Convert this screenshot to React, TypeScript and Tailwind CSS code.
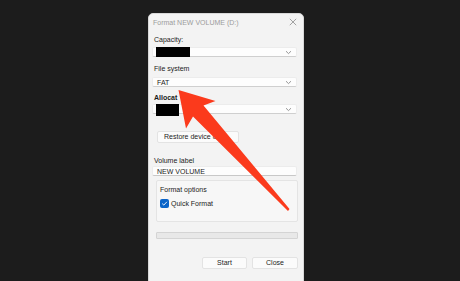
import React from "react";

const Chevron = () => (
  <svg width="7" height="5" viewBox="0 0 7 5" className="shrink-0">
    <path d="M1 1.2 L3.5 3.6 L6 1.2" fill="none" stroke="#8a8a8a" strokeWidth="0.9" />
  </svg>
);

const Combo = ({ children }: { children?: React.ReactNode }) => (
  <div className="relative flex h-[10px] w-[145px] items-center justify-between rounded-[2px] border border-[#ececec] border-b-[#cfcfcf] bg-[#fdfdfd] pl-[3px] pr-[4px]">
    <div className="flex items-center">{children}</div>
    <Chevron />
  </div>
);

export default function App() {
  return (
    <div
      className="relative h-[281px] w-[460px] overflow-hidden bg-[#1c1c1c] pl-[148px] pt-[13px] text-[7px] text-[#1b1b1b]"
      style={{ fontFamily: '"Liberation Sans", Arial, sans-serif' }}
    >
      <div className="flex h-[280px] w-[156px] flex-col rounded-t-[5px] border border-[#d8d8d8] bg-[#f3f3f3]">
        {/* title bar */}
        <div className="flex h-[16px] items-center justify-between pl-[4px] pr-[6px]">
          <span className="text-[7px] leading-none text-[#9c9c9c]">Format NEW VOLUME (D:)</span>
          <svg width="8" height="8" viewBox="0 0 8 8">
            <path d="M0.8 0.8 L7.2 7.2 M7.2 0.8 L0.8 7.2" stroke="#8c8c8c" strokeWidth="0.8" />
          </svg>
        </div>

        <div className="flex flex-col pl-[3px]">
          <div className="mt-[5px] h-[10px] pl-[2px] leading-[10px]">Capacity:</div>
          <div className="mt-[2px]">
            <Combo>
              <div className="h-[10px] w-[34px] bg-black" />
            </Combo>
          </div>

          <div className="mt-[7px] h-[10px] pl-[2px] leading-[10px]">File system</div>
          <div className="mt-[3px]">
            <Combo>
              <span className="pl-[1px] leading-none">FAT</span>
            </Combo>
          </div>

          <div className="mt-[6px] h-[10px] pl-[2px] font-semibold leading-[10px]">Allocat</div>
          <div className="mt-[1px]">
            <Combo>
              <div className="absolute -top-[1px] left-[3px] h-[12px] w-[23px] bg-black" />
            </Combo>
          </div>

          <div className="ml-[5px] mt-[17px] flex h-[12px] w-[82px] items-center overflow-hidden whitespace-nowrap rounded-[2px] border border-[#e3e3e3] bg-[#fbfbfb] pl-[6px]">
            <span className="w-[58px] overflow-hidden whitespace-nowrap">Restore device defaults</span>
          </div>

          <div className="mt-[13px] h-[9px] pl-[2px] leading-[9px]">Volume label</div>
          <div className="mt-[1px] flex h-[10px] w-[145px] items-center rounded-[2px] border border-[#ececec] border-b-[#c8c8c8] bg-[#fdfdfd] pl-[4px] leading-none">
            NEW VOLUME
          </div>

          <div className="ml-[4px] mt-[4px] flex h-[42px] w-[142px] flex-col rounded-[2px] border border-[#e4e4e4] bg-[#f7f7f7] pl-[3px]">
            <div className="mt-[4px] h-[10px] leading-[10px]">Format options</div>
            <div className="mt-[4px] flex items-center gap-[2px]">
              <div className="flex h-[9px] w-[9px] items-center justify-center rounded-[2px] bg-[#0a64c8]">
                <svg width="7" height="7" viewBox="0 0 7 7">
                  <path d="M1.2 3.6 L2.8 5.1 L5.9 1.8" fill="none" stroke="#ffffff" strokeWidth="0.9" />
                </svg>
              </div>
              <span className="leading-none">Quick Format</span>
            </div>
          </div>

          <div className="ml-[4px] mt-[10px] h-[7px] w-[142px] rounded-[1px] border border-[#d4d4d4] bg-[#e8e8e8]" />

          <div className="ml-[50px] mt-[18px] flex gap-[5px]">
            <div className="flex h-[12px] w-[45px] items-center justify-center rounded-[2px] border border-[#e3e3e3] bg-[#fbfbfb]">
              Start
            </div>
            <div className="flex h-[12px] w-[46px] items-center justify-center rounded-[2px] border border-[#e3e3e3] bg-[#fbfbfb]">
              Close
            </div>
          </div>
        </div>
      </div>

      {/* red annotation arrow */}
      <svg className="pointer-events-none absolute left-0 top-0" width="460" height="281" viewBox="0 0 460 281">
        <polygon
          points="178.5,90 215.5,101 203.5,105.5 289.5,209 288,211 193,116.5 186,128.5"
          fill="#fb3a1c"
        />
      </svg>
    </div>
  );
}
